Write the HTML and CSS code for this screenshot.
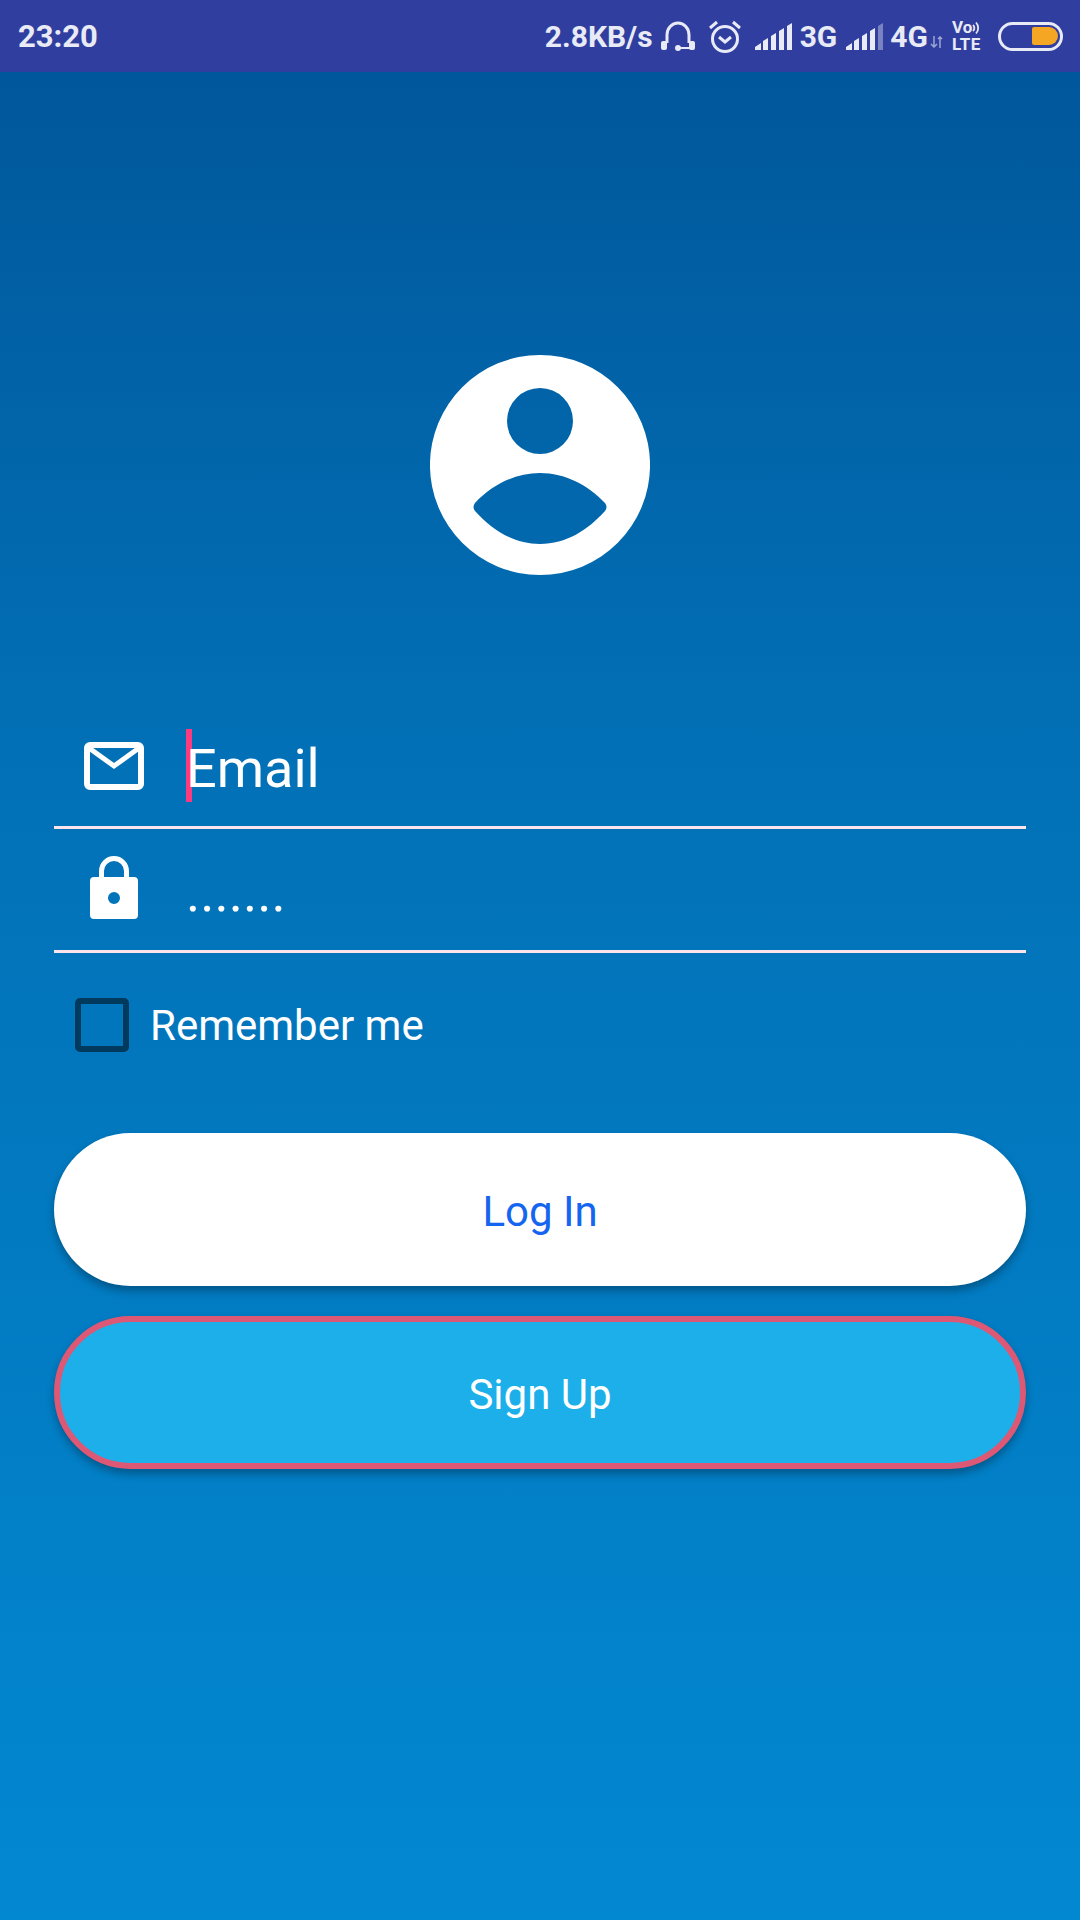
FILE: index.html
```html
<!DOCTYPE html>
<html lang="en">
<head>
    <meta charset="UTF-8">
    <meta name="viewport" content="width=device-width, initial-scale=1.0">
    <title>Log In</title>
    <link rel="stylesheet" href="styles.css">
</head>
<body>
    <div id="statusbar">
        <span class="time">23:20</span>
        <div class="status-right">
            <span class="speed">2.8KB/s</span>
            <svg class="ic-headset" width="34" height="30" viewBox="0 0 34 30">
                <path d="M6 22V14a11 12 0 0 1 22 0v8" fill="none" stroke="#e8eaf6" stroke-width="3"/>
                <rect x="0" y="20" width="6" height="9" rx="2" fill="#e8eaf6"/>
                <rect x="28" y="20" width="6" height="9" rx="2" fill="#e8eaf6"/>
                <path d="M17 27H29" stroke="#e8eaf6" stroke-width="2"/>
                <circle cx="17" cy="27" r="3" fill="#e8eaf6"/>
            </svg>
            <svg class="ic-alarm" width="34" height="33" viewBox="0 0 34 33">
                <circle cx="17" cy="19" r="12.500" fill="none" stroke="#e8eaf6" stroke-width="3"/>
                <path d="M11 17l6 5 6-5" fill="none" stroke="#e8eaf6" stroke-width="3"/>
                <path d="M2 8l7-6M32 8l-7-6" fill="none" stroke="#e8eaf6" stroke-width="3"/>
            </svg>
            <svg class="ic-signal" width="37" height="27" viewBox="0 0 37 27" fill="#e8eaf6">
                <path d="M0 27v-3l6-4v7zM8 27V18l5-3v12zM16 27V13l5-3v17zM24 27V8l5-3v22zM32 27V3l5-3v27z"/>
            </svg>
            <span class="net net3">3G</span>
            <svg class="ic-signal2" width="37" height="27" viewBox="0 0 37 27" fill="#e8eaf6">
                <path d="M0 27v-3l6-4v7zM8 27V18l5-3v12zM16 27V13l5-3v17zM24 27V8l5-3v22z"/>
                <path d="M32 27V3l5-3v27z" opacity="0.4"/>
            </svg>
            <span class="net net4">4G</span>
            <svg class="ic-arrows" width="14" height="12" viewBox="0 0 14 12">
                <path d="M4 0v11M1 8l3 3 3-3" fill="none" stroke="#e8eaf6" stroke-width="1.500" opacity="0.6"/>
                <path d="M10 12V1M8 3l2-2 2 2" fill="none" stroke="#e8eaf6" stroke-width="1.500" opacity="0.6"/>
            </svg>
            <div class="volte">
                <div class="vo">Vo<svg width="9" height="14" viewBox="0 0 9 14"><path d="M1 4a4 4 0 0 1 0 6M4 1.500a8 8 0 0 1 0 11" fill="none" stroke="#e8eaf6" stroke-width="1.800"/></svg></div>
                <div class="lte">LTE</div>
            </div>
            <div class="battery"><div class="battery-level"></div></div>
        </div>
    </div>

    <div id="main">
        <svg class="avatar" width="220" height="220" viewBox="0 0 220 220">
            <path fill="#fff" fill-rule="evenodd" d="M110 0a110 110 0 1 0 0 220a110 110 0 1 0 0-220zM110 33a33 33 0 1 1 0 66a33 33 0 1 1 0-66zM45 148C62 130 85 118 110 118C135 118 158 130 175 148Q178 152 175 156C158 175 136 189 110 189C84 189 62 175 45 156Q42 152 45 148z"/>
        </svg>

        <div class="field">
            <div class="field-icon">
                <svg width="60" height="48" viewBox="0 0 60 48">
                    <rect x="3" y="3" width="54" height="42" rx="3" fill="none" stroke="#fff" stroke-width="6"/>
                    <path d="M5 6l25 18 25-18" fill="none" stroke="#fff" stroke-width="5"/>
                </svg>
            </div>
            <div class="field-text"><span class="caret"></span><span class="value">Email</span></div>
        </div>
        <div class="field">
            <div class="field-icon icon-lock">
                <svg width="48" height="63" viewBox="0 0 48 63">
                    <path d="M11.500 24V15a12.500 12.500 0 0 1 25 0v9" fill="none" stroke="#fff" stroke-width="5"/>
                    <path fill="#fff" fill-rule="evenodd" d="M4 21H44a4 4 0 0 1 4 4V59a4 4 0 0 1-4 4H4a4 4 0 0 1-4-4V25a4 4 0 0 1 4-4zM24 36a6 6 0 1 0 0 12a6 6 0 1 0 0-12z"/>
                </svg>
            </div>
            <div class="field-text"><span class="value">.......</span></div>
        </div>

        <div class="remember">
            <span class="checkbox"></span>
            <span class="remember-label">Remember me</span>
        </div>

        <button class="btn btn-login">Log In</button>
        <button class="btn btn-signup">Sign Up</button>
    </div>
</body>
</html>
```

FILE: styles.css
```css
*{
    margin: 0;
    padding: 0;
    box-sizing: border-box;
    font-family: Roboto, "Liberation Sans", sans-serif;
}
html, body{
    height: 100%;
}
body{
    display: flex;
    flex-direction: column;
    background-color: #0288d1;
}

/* status bar */
#statusbar{
    display: flex;
    align-items: center;
    justify-content: space-between;
    height: 72px;
    padding: 0 17px 0 18px;
    background-color: #303f9f;
    color: #e8eaf6;
}
.time{
    font-size: 31px;
    font-weight: 700;
}
.status-right{
    display: flex;
    align-items: center;
}
.speed{
    font-size: 30px;
    font-weight: 700;
}
.net{
    font-size: 30px;
    font-weight: 700;
}
.net3{
    margin-left: 8px;
}
.net4{
    margin-left: 7px;
}
.ic-headset{
    margin-left: 8px;
}
.ic-alarm{
    margin-left: 13px;
}
.ic-signal{
    margin-left: 13px;
}
.ic-signal2{
    margin-left: 9px;
}
.ic-arrows{
    margin: 12px 0 0 2px;
}
.volte{
    display: flex;
    flex-direction: column;
    margin-left: 8px;
    width: 31px;
    font-size: 17px;
    font-weight: 700;
    line-height: 17px;
}
.vo{
    display: flex;
    align-items: center;
}
.lte{
    letter-spacing: 0.5px;
}
.battery{
    display: flex;
    justify-content: flex-end;
    align-items: center;
    width: 65px;
    height: 29px;
    margin-left: 15px;
    padding-right: 2px;
    border: 3px solid #e8eaf6;
    border-radius: 15px;
}
.battery-level{
    width: 26px;
    height: 18px;
    background-color: #f5a623;
    border-radius: 2px 9px 9px 2px;
}

/* login form */
#main{
    flex: 1;
    display: flex;
    flex-direction: column;
    padding: 0 54px;
    background-image: linear-gradient(to bottom, #01579b, #0271b7 38%, #0288d1);
}
.avatar{
    display: block;
    margin: 283px auto 130px;
}
.field{
    display: flex;
    align-items: center;
    height: 124px;
    border-bottom: 3px solid #fce4ec;
}
.field-icon{
    display: flex;
    justify-content: center;
    width: 120px;
    margin-right: 12px;
}
.icon-lock{
    margin-bottom: 4px;
}
.field-text{
    position: relative;
    padding-top: 5px;
    color: #fff;
    font-size: 54px;
}
.value{
    position: relative;
}
.caret{
    position: absolute;
    left: 0;
    top: -3px;
    width: 6px;
    height: 73px;
    background-color: #fb3a80;
}
.remember{
    display: flex;
    align-items: center;
    margin: 45px 0 81px 21px;
}
.checkbox{
    width: 54px;
    height: 54px;
    border: 6px solid #023a5e;
    border-radius: 5px;
}
.remember-label{
    margin-left: 21px;
    color: #fff;
    font-size: 42px;
}
.btn{
    display: block;
    width: 100%;
    height: 153px;
    padding-top: 4px;
    border: none;
    border-radius: 77px;
    font-size: 42px;
    box-shadow: 0 5px 8px rgba(0, 0, 0, 0.3);
}
.btn-login{
    background-color: #fff;
    color: #1565f0;
}
.btn-signup{
    margin-top: 30px;
    background-color: #1cafea;
    border: 6px solid #dd5874;
    color: #fff;
}
```
